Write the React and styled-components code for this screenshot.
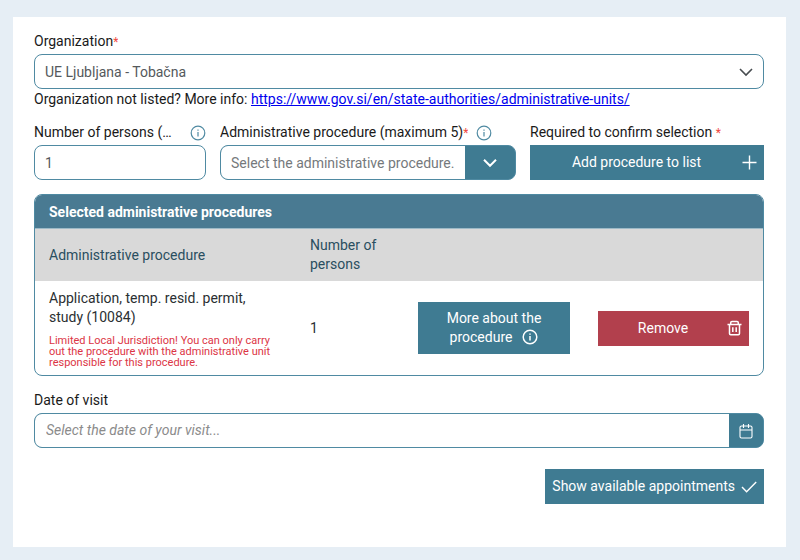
import React from "react";
import styled, { createGlobalStyle, css } from "styled-components";

const teal = "#3f7b92";
const line = "#4f8aa2";

const GlobalStyle = createGlobalStyle`
  *, *::before, *::after { box-sizing: border-box; }
  body {
    margin: 0;
    background: #e6eef5;
    color: #1a1a1a;
    font-family: Roboto, "Noto Sans", sans-serif;
    font-size: 14px;
    line-height: 19px;
  }
  button, input, select { font: inherit; }
`;

const Page = styled.main`
  min-height: 100vh;
  display: flex;
  padding: 17px 14px 13px 13px;
`;

const Panel = styled.form`
  flex: 1;
  min-width: 0;
  padding: 15px 22px 43px 21px;
  background: #fff;
`;

const Field = styled.div`
  display: flex;
  flex-direction: column;
  gap: 3px;
  min-width: 0;
`;

const LabelRow = styled.div`
  display: flex;
  align-items: center;
  gap: 8px;
  min-width: 0;
  height: 19px;
`;

const Label = styled.label`
  min-width: 0;
  flex: ${(p) => (p.$grow ? "1" : "0 1 auto")};
  overflow: hidden;
  text-overflow: ellipsis;
  white-space: nowrap;
`;

const Star = styled.span`
  color: #f0483e;
  font-size: 12px;
`;

const Help = styled.p`
  margin: 1px 0 14px;
`;

const Link = styled.a`
  color: #0000ee;
`;

const SelectBox = styled.div`
  display: grid;
  grid-template-columns: minmax(0, 1fr) auto;
  height: 35px;
  border: 1px solid ${line};
  border-radius: 8px;
  background: ${(p) => (p.$filled ? teal : "#fff")};
  overflow: hidden;
`;

const Select = styled.select`
  grid-column: 1 / 3;
  grid-row: 1;
  min-width: 0;
  padding: 2px 10px 0;
  border: 0;
  outline: 0;
  appearance: none;
  background: transparent;
  color: #55595c;
`;

const ProcedureSelect = styled(Select)`
  grid-column: 1;
  color: #75797c;
  background: #fff;
`;

const Chevron = styled.span`
  grid-column: 2;
  grid-row: 1;
  display: flex;
  align-items: center;
  justify-content: center;
  width: ${(p) => (p.$filled ? "50px" : "34px")};
  color: ${(p) => (p.$filled ? "#fff" : "#474c50")};
  pointer-events: none;
`;

const NumberInput = styled.input`
  width: 100%;
  height: 35px;
  padding: 0 10px;
  border: 1px solid ${line};
  border-radius: 8px;
  color: #55595c;
`;

const FieldGrid = styled.div`
  display: grid;
  grid-template-columns: 172fr 296fr 234fr;
  gap: 14px;
  margin-bottom: 14px;
`;

const Button = styled.button`
  display: flex;
  align-items: center;
  width: ${(p) => (p.$fit ? "auto" : "100%")};
  min-height: 35px;
  padding: 0 7px;
  gap: 6px;
  border: 0;
  background: ${(p) => (p.$danger ? "#b2404d" : teal)};
  color: #fff;
  ${(p) =>
    p.$stacked &&
    css`
      display: block;
      padding: 7px 20px;
      text-align: center;
    `}
`;

const ButtonText = styled.span`
  flex: 1;
  text-align: center;
`;

const InlineIcon = styled.span`
  display: inline-block;
  height: 16px;
  margin-left: 10px;
  vertical-align: text-bottom;
`;

const Card = styled.section`
  border: 1px solid ${line};
  border-radius: 8px;
  overflow: hidden;
  margin-bottom: 15px;
`;

const CardTitle = styled.h2`
  margin: 0;
  padding: 8px 14px 6px;
  border-bottom: 1px solid #9dbac7;
  background: #497a92;
  color: #fff;
  font-size: 14px;
  font-weight: 700;
  line-height: 19px;
`;

const Table = styled.table`
  width: 100%;
  border-collapse: collapse;
  table-layout: fixed;
`;

const HeadCell = styled.th`
  width: ${(p) => p.$width || "auto"};
  padding: 7px 14px;
  background: #d9d9d9;
  color: #2a4e60;
  font-weight: 400;
  text-align: left;
`;

const Cell = styled.td`
  height: 94px;
  padding: 7px 14px;
  color: #2b2f32;
`;

const Warning = styled.p`
  margin: 8px 0 0;
  color: #dc3545;
  font-size: 11px;
  line-height: 11px;
`;

const DateBox = styled.div`
  display: flex;
  height: 35px;
  border: 1px solid ${line};
  border-radius: 8px;
  background: ${teal};
  overflow: hidden;
`;

const DateInput = styled.input`
  flex: 1;
  min-width: 0;
  padding: 0 11px;
  border: 0;
  outline: 0;
  background: #fff;
  &::placeholder {
    color: #8b8b8b;
    font-style: italic;
    opacity: 1;
  }
`;

const DateButton = styled.button`
  display: flex;
  align-items: center;
  justify-content: center;
  width: 34px;
  padding: 0;
  border: 0;
  background: ${teal};
  color: #fff;
`;

const Actions = styled.div`
  display: flex;
  justify-content: flex-end;
  margin-top: 21px;
`;

const Svg = styled.svg`
  display: block;
  flex: none;
  fill: none;
  stroke: currentColor;
`;

const InfoSvg = styled(Svg)`
  color: ${(p) => (p.$light ? "#fff" : line)};
`;

const InfoIcon = ({ light }) => (
  <InfoSvg $light={light} width="16" height="16" viewBox="0 0 16 16" strokeWidth={light ? 1.5 : 1.2} aria-hidden="true">
    <circle cx="8" cy="8" r="6.8" />
    <path d="M8 7v4.4M8 4.4v1.3" />
  </InfoSvg>
);

const ChevronIcon = ({ small }) => (
  <Svg width={small ? 14 : 16} height="10" viewBox={small ? "0 0 14 10" : "0 0 16 10"} strokeWidth={small ? 2 : 1.6} aria-hidden="true">
    <path d={small ? "M1 1.8l6 6 6-6" : "M2 2l6 6 6-6"} />
  </Svg>
);

const PlusIcon = () => (
  <Svg width="15" height="15" viewBox="0 0 15 15" strokeWidth="1.4" aria-hidden="true">
    <path d="M7.5.5v14M.5 7.5h14" />
  </Svg>
);

const TrashIcon = () => (
  <Svg width="15" height="16" viewBox="0 0 15 16" strokeWidth="1.5" aria-hidden="true">
    <path d="M.5 4.5h14M3.7 4.3V2.8q0-1.3 1.3-1.3h5q1.3 0 1.3 1.3v1.5M2.5 4.5v9q0 1.2 1.2 1.2h7.6q1.2 0 1.2-1.2v-9M5.8 7.2v4.8M9.2 7.2v4.8" />
  </Svg>
);

const CalendarIcon = () => (
  <Svg width="14" height="16" viewBox="0 0 14 16" strokeWidth="1.1" aria-hidden="true">
    <rect x="1" y="3" width="12" height="12" rx="1.5" />
    <path d="M1 7h12M4.5 1v4M9.5 1v4" />
  </Svg>
);

const CheckIcon = () => (
  <Svg width="16" height="12" viewBox="0 0 16 12" strokeWidth="1.4" aria-hidden="true">
    <path d="M1 6l4.6 4.8L15.2 1" />
  </Svg>
);

export default function App() {
  return (
    <>
      <GlobalStyle />
      <Page>
        <Panel onSubmit={(e) => e.preventDefault()}>
          <Field>
            <LabelRow>
              <Label htmlFor="organization">
                Organization<Star>*</Star>
              </Label>
            </LabelRow>
            <SelectBox>
              <Select id="organization" defaultValue="tobacna">
                <option value="tobacna">UE Ljubljana - Tobačna</option>
              </Select>
              <Chevron>
                <ChevronIcon />
              </Chevron>
            </SelectBox>
          </Field>
          <Help>
            Organization not listed? More info:{" "}
            <Link href="https://www.gov.si/en/state-authorities/administrative-units/">
              https://www.gov.si/en/state-authorities/administrative-units/
            </Link>
          </Help>

          <FieldGrid>
            <Field>
              <LabelRow>
                <Label htmlFor="persons" $grow>
                  Number of persons (maximum 5)
                </Label>
                <InfoIcon />
              </LabelRow>
              <NumberInput id="persons" type="text" inputMode="numeric" defaultValue="1" />
            </Field>
            <Field>
              <LabelRow>
                <Label htmlFor="procedure">
                  Administrative procedure (maximum 5)<Star>*</Star>
                </Label>
                <InfoIcon />
              </LabelRow>
              <SelectBox $filled>
                <ProcedureSelect id="procedure" defaultValue="">
                  <option value="">Select the administrative procedure.</option>
                </ProcedureSelect>
                <Chevron $filled>
                  <ChevronIcon small />
                </Chevron>
              </SelectBox>
            </Field>
            <Field>
              <LabelRow>
                <Label htmlFor="add">
                  Required to confirm selection <Star>*</Star>
                </Label>
              </LabelRow>
              <Button id="add" type="button">
                <ButtonText>Add procedure to list</ButtonText>
                <PlusIcon />
              </Button>
            </Field>
          </FieldGrid>

          <Card>
            <CardTitle>Selected administrative procedures</CardTitle>
            <Table>
              <thead>
                <tr>
                  <HeadCell scope="col">Administrative procedure</HeadCell>
                  <HeadCell scope="col" $width="108px">Number of persons</HeadCell>
                  <HeadCell $width="180px" />
                  <HeadCell $width="179px" />
                </tr>
              </thead>
              <tbody>
                <tr>
                  <Cell>
                    Application, temp. resid. permit, study (10084)
                    <Warning>
                      Limited Local Jurisdiction! You can only carry out the procedure with the
                      administrative unit responsible for this procedure.
                    </Warning>
                  </Cell>
                  <Cell>1</Cell>
                  <Cell>
                    <Button type="button" $stacked>
                      More about the procedure
                      <InlineIcon>
                        <InfoIcon light />
                      </InlineIcon>
                    </Button>
                  </Cell>
                  <Cell>
                    <Button type="button" $danger>
                      <ButtonText>Remove</ButtonText>
                      <TrashIcon />
                    </Button>
                  </Cell>
                </tr>
              </tbody>
            </Table>
          </Card>

          <Field>
            <LabelRow>
              <Label htmlFor="date">Date of visit</Label>
            </LabelRow>
            <DateBox>
              <DateInput id="date" type="text" placeholder="Select the date of your visit..." />
              <DateButton type="button" aria-label="Open calendar">
                <CalendarIcon />
              </DateButton>
            </DateBox>
          </Field>

          <Actions>
            <Button type="submit" $fit>
              Show available appointments
              <CheckIcon />
            </Button>
          </Actions>
        </Panel>
      </Page>
    </>
  );
}
